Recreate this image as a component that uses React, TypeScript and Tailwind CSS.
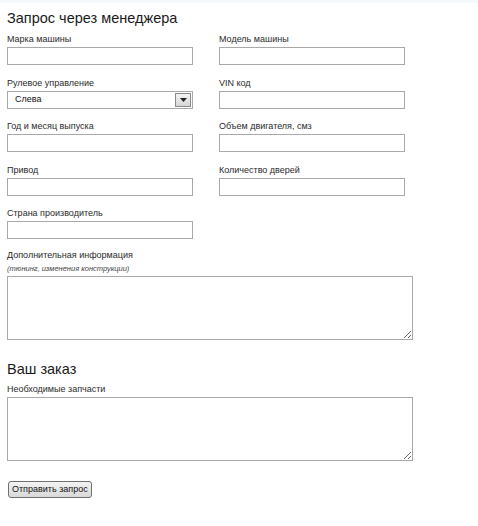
import { useState } from 'react';

type Field = { label: string; kind?: 'select' };

const fields: Field[] = [
  { label: 'Марка машины' },
  { label: 'Модель машины' },
  { label: 'Рулевое управление', kind: 'select' },
  { label: 'VIN код' },
  { label: 'Год и месяц выпуска' },
  { label: 'Объем двигателя, смз' },
  { label: 'Привод' },
  { label: 'Количество дверей' },
  { label: 'Страна производитель' },
];

function SteeringSelect() {
  const [value] = useState('Слева');
  return (
    <div className="mt-px h-[18px] w-full border border-[#a9a9a9] bg-white flex items-center justify-between pl-[7px] pr-[1px]">
      <span className="text-[9px] leading-none text-[#111]">{value}</span>
      <span className="w-[16px] h-[14px] border border-[#8a8a8a] bg-gradient-to-b from-[#f4f4f4] to-[#d6d6d6] flex items-center justify-center">
        <svg width="7" height="4" viewBox="0 0 7 4">
          <path d="M0 0 H7 L3.5 4 Z" fill="#222" />
        </svg>
      </span>
    </div>
  );
}

export default function App() {
  const inputCls = 'mt-px block h-[18px] w-full border border-[#a9a9a9] bg-white outline-none px-1 text-[9px]';
  const areaCls = 'block w-[406px] h-[64px] border border-[#a9a9a9] bg-white outline-none p-1 text-[9px] resize';

  return (
    <div className="w-[478px] h-[526px] bg-white text-[#222] font-['Liberation_Sans',Arial,sans-serif]">
      <div className="h-[3px] bg-[#f4f8fc]" />
      <div className="px-[7px]">
        <h2 className="text-[14.5px] leading-[20px] mt-[5px] mb-[5px] text-[#1a1a1a]">Запрос через менеджера</h2>

        <div className="grid grid-cols-[186px_186px] gap-x-[26px] gap-y-[11.5px]">
          {fields.map((f) => (
            <div key={f.label}>
              <div className="text-[9px] leading-[13px] h-[13px] text-[#2a2a2a]">{f.label}</div>
              {f.kind === 'select' ? <SteeringSelect /> : <input className={inputCls} />}
            </div>
          ))}
        </div>

        <div className="mt-[10px] text-[9px] leading-[13px] text-[#2a2a2a]">Дополнительная информация</div>
        <div className="text-[7.5px] leading-[13px] italic text-[#444]">(тюнинг, изменения конструкции)</div>
        <textarea className={`mt-px ${areaCls}`} />

        <h2 className="text-[14.5px] leading-[20px] mt-[19px] mb-[4px] text-[#1a1a1a]">Ваш заказ</h2>
        <div className="text-[9px] leading-[13px] text-[#2a2a2a]">Необходимые запчасти</div>
        <textarea className={`mt-px ${areaCls}`} />

        <button className="mt-[20px] ml-px h-[17px] px-[3px] border border-[#6f6f6f] rounded-[3px] bg-gradient-to-b from-[#f3f3f3] to-[#d9d9d9] text-[9px] leading-none text-[#111]">
          Отправить запрос
        </button>
      </div>
    </div>
  );
}
